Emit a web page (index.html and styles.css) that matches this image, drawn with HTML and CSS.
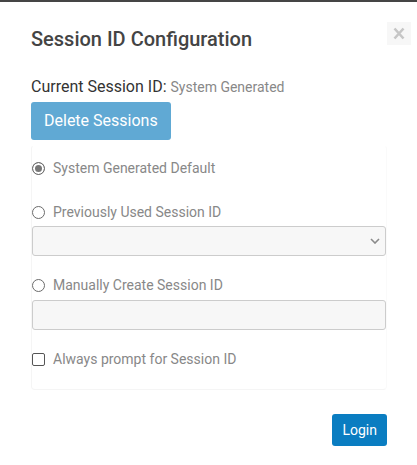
FILE: index.html
```html
<!DOCTYPE html>
<html>
<head>
<meta charset="utf-8">
<link rel="stylesheet" href="styles.css">
</head>
<body>
<div class="topbar"></div>
<div class="modal">
  <div class="header">
    <h1 class="title">Session ID Configuration</h1>
    <button class="close" aria-label="Close">
      <svg width="24" height="23" viewBox="0 0 24 23"><path d="M7.5 6.5 L16.5 16.5 M16.5 6.5 L7.5 16.5" stroke="#c6c6c6" stroke-width="2.6" stroke-linecap="butt" fill="none"/></svg>
    </button>
  </div>
  <div class="body">
    <div class="current">Current Session ID: <span class="current-val">System Generated</span></div>
    <button class="btn-delete">Delete Sessions</button>
    <div class="panel">
      <label class="opt opt-first"><input type="radio" name="sid" checked><span>System Generated Default</span></label>
      <label class="opt opt-gap"><input type="radio" name="sid"><span>Previously Used Session ID</span></label>
      <div class="select-wrap">
        <select class="field"><option></option></select>
        <svg class="chev" width="10" height="6" viewBox="0 0 10 6"><path d="M1 1 L5 5 L9 1" stroke="#8a8a8a" stroke-width="1.6" fill="none"/></svg>
      </div>
      <label class="opt opt-gap2"><input type="radio" name="sid"><span>Manually Create Session ID</span></label>
      <input class="field field-input" type="text">
      <label class="opt opt-gap3"><input type="checkbox"><span>Always prompt for Session ID</span></label>
    </div>
    <div class="footer">
      <button class="btn-login">Login</button>
    </div>
  </div>
</div>
</body>
</html>
```
FILE: styles.css
```css
* { box-sizing: border-box; }
html, body { margin: 0; padding: 0; background: #fff; }
body { font-family: Roboto, "Liberation Sans", Arial, sans-serif; width: 417px; height: 465px; overflow: hidden; }
.topbar { height: 2px; background: #454545; }
.modal { padding: 0 6px 0 31px; }
.header { display: flex; justify-content: space-between; align-items: flex-start; }
.title { margin: 25px 0 0 0; font-size: 20px; line-height: 24px; font-weight: 500; color: #444; letter-spacing: 0; }
.close { margin-top: 20px; width: 24px; height: 23px; padding: 0; border: 0; background: #f7f7f7; display: flex; }
.body { padding-right: 24px; display: flex; flex-direction: column; align-items: flex-start; }
.current { margin-top: 26px; font-size: 16px; line-height: 20px; color: #333; }
.current-val { font-size: 14px; color: #888; }
.btn-delete { margin-top: 5px; font-family: inherit; font-size: 16px; line-height: 20px; padding: 9px 13px; color: #fff; background: #60a9d4; border: 0; border-radius: 3px; }
.panel { margin-top: 5px; width: 356px; border: 1px solid #f5f5f5; border-top-color: #fff; border-right-color: #fafafa; border-radius: 4px; padding: 12px 0 20px 0; display: flex; flex-direction: column; }
.opt { display: flex; align-items: center; gap: 8px; font-size: 14px; line-height: 20px; color: #888; }
.opt-gap { margin-top: 24px; }
.opt-gap2 { margin-top: 19px; }
.opt-gap3 { margin-top: 19px; }
.opt input { appearance: none; -webkit-appearance: none; margin: 0; width: 13px; height: 13px; flex: none; background: #fff; }
.opt input[type=radio] { border: 1px solid #6b6b6b; border-radius: 50%; }
.opt input[type=radio]:checked { background: #777; box-shadow: inset 0 0 0 2px #fff; border-color: #6b6b6b; }
.opt input[type=checkbox] { border: 1px solid #555; border-radius: 2px; }
.select-wrap { position: relative; margin-top: 4px; }
.field { display: block; width: 354px; height: 30px; margin: 0; border: 1px solid #ccc; border-radius: 3px; background: #f7f7f7; appearance: none; -webkit-appearance: none; font-family: inherit; font-size: 14px; }
.field-input { margin-top: 5px; }
.chev { position: absolute; right: 6px; top: 12px; }
.footer { width: 356px; display: flex; justify-content: flex-end; margin-top: 24px; }
.btn-login { font-family: inherit; font-size: 14px; line-height: 20px; padding: 6px 10px; color: #fff; background: #0a7dc1; border: 0; border-radius: 3px; }
```
